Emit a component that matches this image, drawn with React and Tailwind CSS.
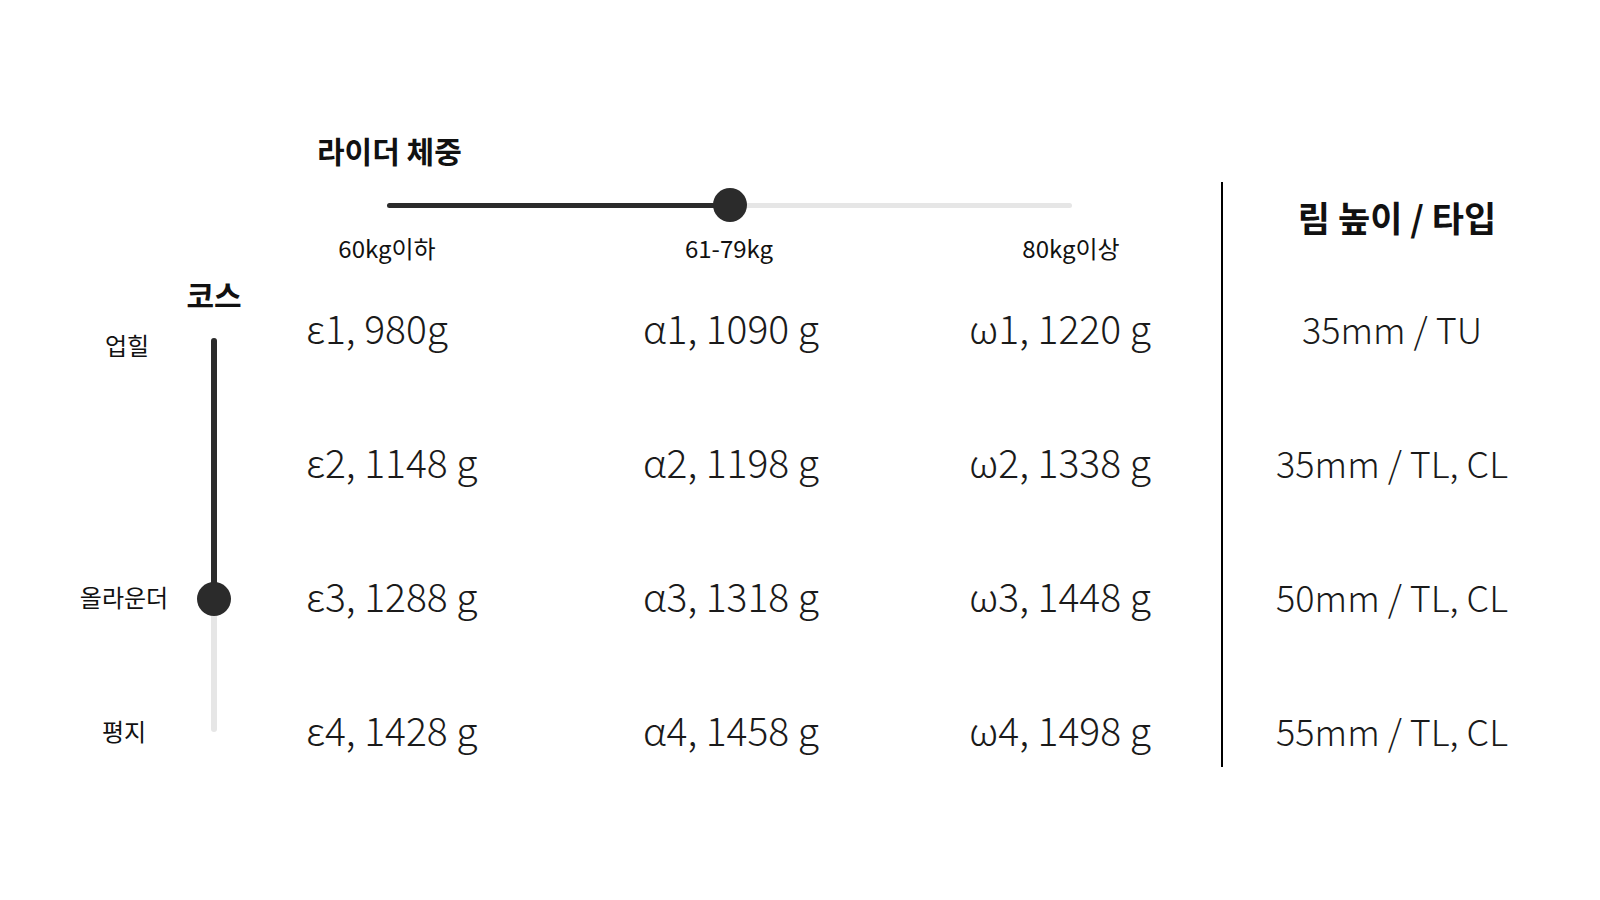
import React from 'react';

const weights = [
  ['ε1, 980g', 'α1, 1090 g', 'ω1, 1220 g'],
  ['ε2, 1148 g', 'α2, 1198 g', 'ω2, 1338 g'],
  ['ε3, 1288 g', 'α3, 1318 g', 'ω3, 1448 g'],
  ['ε4, 1428 g', 'α4, 1458 g', 'ω4, 1498 g'],
];

const rims = ['35mm / TU', '35mm / TL, CL', '50mm / TL, CL', '55mm / TL, CL'];

const WeightSlider = () => (
  <div className="relative ml-[387px] mt-[20px] flex h-[34px] w-[685px] items-center">
    <div className="h-[5px] w-full rounded-full bg-[#e6e6e6]" />
    <div className="absolute left-0 h-[5px] w-1/2 rounded-full bg-[#2b2b2b]" />
    <div className="absolute left-1/2 h-[34px] w-[34px] -translate-x-1/2 rounded-full bg-[#2b2b2b]" />
  </div>
);

const CourseSlider = () => (
  <div className="relative mt-[27px] flex h-[394px] w-[34px] justify-center">
    <div className="h-full w-[6px] rounded-full bg-[#e6e6e6]" />
    <div className="absolute top-0 h-[261px] w-[6px] rounded-full bg-[#2b2b2b]" />
    <div className="absolute top-[244px] h-[34px] w-[34px] rounded-full bg-[#2b2b2b]" />
  </div>
);

export default function App() {
  return (
    <div className="flex h-[900px] w-[1600px] bg-white font-['Noto_Sans_CJK_KR','Noto_Sans',sans-serif] text-[#111]">
      <div className="flex w-[1221px] flex-col">
        <div className="pl-[317px] pt-[132px] text-[30px] font-bold leading-[36px]">라이더 체중</div>
        <WeightSlider />
        <div className="ml-[287px] mt-[12px] flex w-[884px] justify-between text-[24px] leading-[28px]">
          <span className="w-[200px] text-center">60kg이하</span>
          <span className="w-[200px] text-center">61-79kg</span>
          <span className="w-[200px] text-center">80kg이상</span>
        </div>

        <div className="flex">
          <div className="flex w-[188px] flex-col pl-[60px] text-center text-[24px] leading-[30px]">
            <span className="mt-[68px] pl-[6px]">업힐</span>
            <span className="mt-[222px]">올라운더</span>
            <span className="mt-[104px]">평지</span>
          </div>
          <div className="flex w-[52px] flex-col items-center">
            <span className="mt-[15px] whitespace-nowrap text-[30px] font-bold leading-[34px]">코스</span>
            <CourseSlider />
          </div>
          <div className="mt-[31px] flex flex-col gap-[66px] text-[39px] font-light leading-[68px] text-[#1a1a1a]">
            {weights.map((row, i) => (
              <div key={i} className="flex">
                <span className="w-[337px] pl-[66px]">{row[0]}</span>
                <span className="w-[326px] pl-[66px]">{row[1]}</span>
                <span className="pl-[66px]">{row[2]}</span>
              </div>
            ))}
          </div>
        </div>
      </div>

      <div className="mt-[182px] h-[585px] w-[2px] bg-black" />

      <div className="flex w-[338px] flex-col items-center">
        <div className="pl-[10px] pt-[195px] text-[35px] font-bold leading-[44px]">림 높이 / 타입</div>
        <div className="mt-[55px] flex flex-col gap-[66px] text-[36px] font-light leading-[68px] text-[#1a1a1a]">
          {rims.map((r) => (
            <div key={r} className="text-center">{r}</div>
          ))}
        </div>
      </div>
    </div>
  );
}
